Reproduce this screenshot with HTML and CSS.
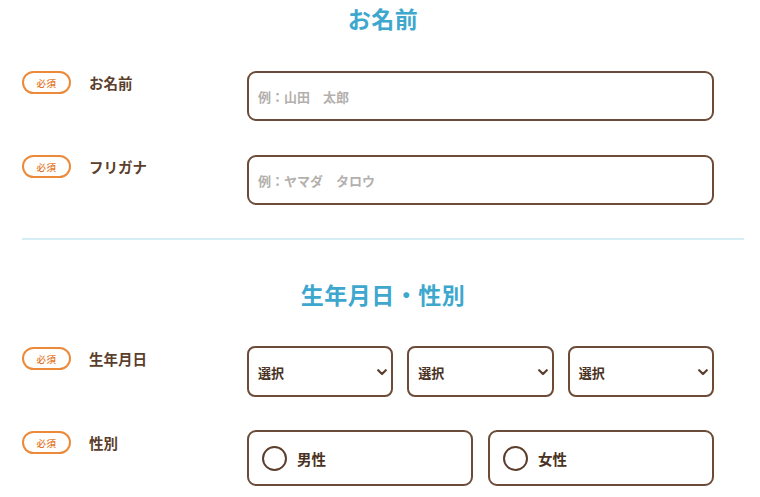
FILE: index.html
```html
<!DOCTYPE html>
<html lang="ja">
<head>
<meta charset="utf-8">
<link rel="stylesheet" href="styles.css">
</head>
<body>
<main class="form">
  <h2 class="title">お名前</h2>
  <div class="row">
    <div class="label"><span class="badge">必須</span><span class="label-text">お名前</span></div>
    <div class="field"><input class="input" type="text" placeholder="例：山田　太郎"></div>
  </div>
  <div class="row">
    <div class="label"><span class="badge">必須</span><span class="label-text">フリガナ</span></div>
    <div class="field"><input class="input" type="text" placeholder="例：ヤマダ　タロウ"></div>
  </div>
  <hr class="divider">
  <h2 class="title">生年月日・性別</h2>
  <div class="row">
    <div class="label"><span class="badge">必須</span><span class="label-text">生年月日</span></div>
    <div class="field selects">
      <div class="select"><span>選択</span><svg class="chev" width="10" height="7" viewBox="0 0 10 7"><path d="M1.2 1.2 L5 5 L8.8 1.2" fill="none" stroke="#5b3f2c" stroke-width="2.2" stroke-linecap="round" stroke-linejoin="round"/></svg></div>
      <div class="select"><span>選択</span><svg class="chev" width="10" height="7" viewBox="0 0 10 7"><path d="M1.2 1.2 L5 5 L8.8 1.2" fill="none" stroke="#5b3f2c" stroke-width="2.2" stroke-linecap="round" stroke-linejoin="round"/></svg></div>
      <div class="select"><span>選択</span><svg class="chev" width="10" height="7" viewBox="0 0 10 7"><path d="M1.2 1.2 L5 5 L8.8 1.2" fill="none" stroke="#5b3f2c" stroke-width="2.2" stroke-linecap="round" stroke-linejoin="round"/></svg></div>
    </div>
  </div>
  <div class="row">
    <div class="label"><span class="badge">必須</span><span class="label-text">性別</span></div>
    <div class="field radios">
      <label class="radio"><span class="circle"></span><span>男性</span></label>
      <label class="radio"><span class="circle"></span><span>女性</span></label>
    </div>
  </div>
</main>
</body>
</html>
```
FILE: styles.css
```css
* { box-sizing: border-box; }
html, body { margin: 0; padding: 0; background: #fff; }
body {
  font-family: "Noto Sans CJK JP", "Noto Sans", sans-serif;
  color: #5b3f2c;
}
.form {
  padding: 0 16px 0 22px;
  display: flex;
  flex-direction: column;
}
.title {
  margin: 0;
  height: 36px;
  line-height: 36px;
  text-align: center;
  font-size: 23px;
  font-weight: 700;
  color: #3ea7cd;
  letter-spacing: 0.5px;
}
.title + .row { margin-top: 35px; }
.row {
  display: flex;
  margin-right: 30px;
}
.row + .row { margin-top: 34px; }
.label {
  width: 225px;
  flex: none;
  display: flex;
  align-items: center;
  height: 23px;
}
.badge {
  width: 49px;
  height: 23px;
  border: 2px solid #ec8a3a;
  border-radius: 12px;
  color: #e2772a;
  font-size: 9.5px;
  font-weight: 500;
  display: flex;
  align-items: center;
  justify-content: center;
  letter-spacing: 0.5px;
}
.label-text {
  margin-left: 18px;
  font-size: 14.5px;
  font-weight: 700;
  color: #5b3f2c;
}
.field { flex: 1; }
.input {
  display: block;
  width: 100%;
  height: 50px;
  border: 2px solid #6b4c38;
  border-radius: 9px;
  padding: 0 9px;
  font-family: inherit;
  font-size: 13px;
  font-weight: 700;
  color: #5b3f2c;
  outline: none;
  background: #fff;
}
.input::placeholder { color: #b3b0ad; }
.divider {
  border: 0;
  height: 2px;
  background: #d5eef6;
  margin: 33px 0 36px;
}
.selects {
  display: grid;
  grid-template-columns: 1fr 1fr 1fr;
  gap: 14px;
  margin-top: -1px;
}
.select {
  height: 51px;
  border: 2px solid #6b4c38;
  border-radius: 8px;
  display: flex;
  align-items: center;
  justify-content: space-between;
  padding: 2px 4px 0 9px;
  font-size: 13px;
  font-weight: 700;
  color: #4a3223;
}
.chev { display: block; }
.radios {
  display: grid;
  grid-template-columns: 1fr 1fr;
  gap: 15px;
  margin-top: -1px;
}
.radio {
  height: 56px;
  border: 2px solid #6b4c38;
  border-radius: 9px;
  display: flex;
  align-items: center;
  padding: 0 0 0 13px;
  font-size: 14.5px;
  font-weight: 700;
  color: #4a3223;
}
.circle {
  width: 25px;
  height: 25px;
  border: 2px solid #5b3f2c;
  border-radius: 50%;
  margin-right: 10px;
  flex: none;
}
```
